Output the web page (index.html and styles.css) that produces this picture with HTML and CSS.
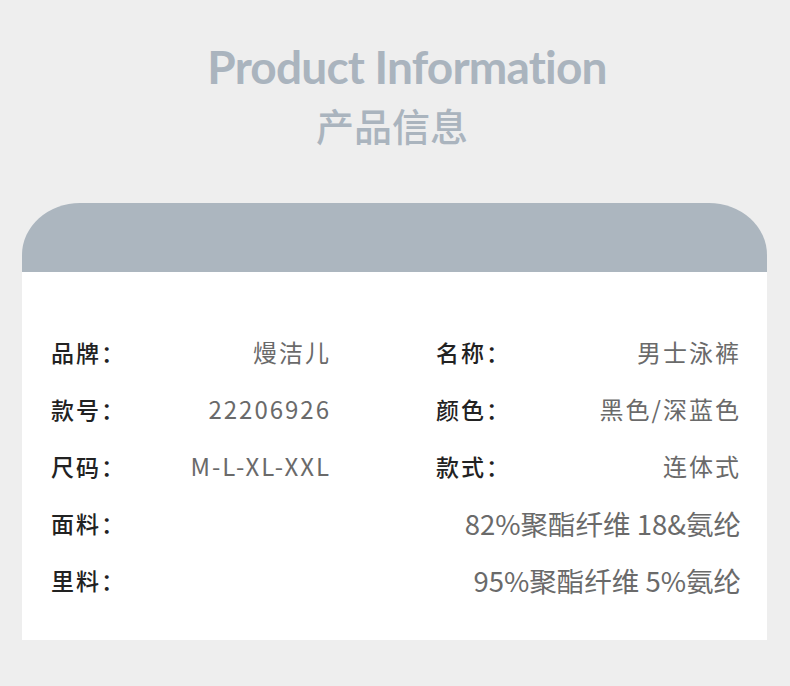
FILE: index.html
```html
<!DOCTYPE html>
<html lang="zh">
<head>
<meta charset="utf-8">
<link rel="stylesheet" href="styles.css">
</head>
<body>
<div class="page">
  <header class="heading">
    <h1 class="title-en">Product Information</h1>
    <h2 class="title-cn">产品信息</h2>
  </header>
  <section class="card">
    <div class="card-top"></div>
    <div class="card-body">
      <div class="row">
        <div class="cell"><span class="label">品牌：</span><span class="value">熳洁儿</span></div>
        <div class="cell"><span class="label">名称：</span><span class="value">男士泳裤</span></div>
      </div>
      <div class="row">
        <div class="cell"><span class="label">款号：</span><span class="value">22206926</span></div>
        <div class="cell"><span class="label">颜色：</span><span class="value">黑色/深蓝色</span></div>
      </div>
      <div class="row">
        <div class="cell"><span class="label">尺码：</span><span class="value">M-L-XL-XXL</span></div>
        <div class="cell"><span class="label">款式：</span><span class="value">连体式</span></div>
      </div>
      <div class="row wide">
        <span class="label">面料：</span><span class="value narrow">82%聚酯纤维 18&amp;氨纶</span>
      </div>
      <div class="row wide">
        <span class="label">里料：</span><span class="value narrow">95%聚酯纤维 5%氨纶</span>
      </div>
    </div>
  </section>
</div>
</body>
</html>
```
FILE: styles.css
```css
html, body {
  margin: 0;
  padding: 0;
  background: #eeeeee;
}
.page {
  width: 790px;
  height: 686px;
  display: flex;
  flex-direction: column;
  align-items: center;
}
.heading {
  display: flex;
  flex-direction: column;
  align-items: center;
  padding-top: 39px;
  padding-left: 24px;
}
.title-en {
  margin: 0;
  font-family: "Lato", "Liberation Sans", sans-serif;
  font-weight: 700;
  font-size: 46px;
  line-height: 56px;
  letter-spacing: -0.8px;
  color: #aab4be;
}
.title-cn {
  margin: 6px 0 0;
  font-family: "Noto Sans CJK SC", sans-serif;
  font-weight: 500;
  font-size: 38px;
  line-height: 48px;
  color: #aab4be;
  padding-right: 30px;
}
.card {
  margin-top: 54px;
  width: 745px;
  align-self: flex-start;
  margin-left: 22px;
}
.card-top {
  height: 69px;
  background: #acb6bf;
  border-radius: 58px 58px 0 0 / 52px 52px 0 0;
}
.card-body {
  height: 368px;
  padding: 51px 26px 0 29px;
  box-sizing: border-box;
  background: #ffffff;
  font-family: "Noto Sans CJK SC", sans-serif;
}
.row {
  display: flex;
  align-items: center;
  height: 57px;
}
.cell {
  display: flex;
  justify-content: space-between;
  align-items: center;
}
.cell:first-child {
  width: 280px;
  margin-right: 105px;
}
.cell + .cell {
  width: 305px;
}
.row.wide {
  justify-content: space-between;
}
.label {
  font-size: 23px;
  line-height: 30px;
  font-weight: 500;
  color: #222222;
  letter-spacing: 2px;
}
.value {
  font-size: 24px;
  line-height: 30px;
  color: #6a6a6a;
  letter-spacing: 2px;
  font-weight: 400;
}
.value.narrow {
  font-size: 27.5px;
  letter-spacing: 0;
}
```
